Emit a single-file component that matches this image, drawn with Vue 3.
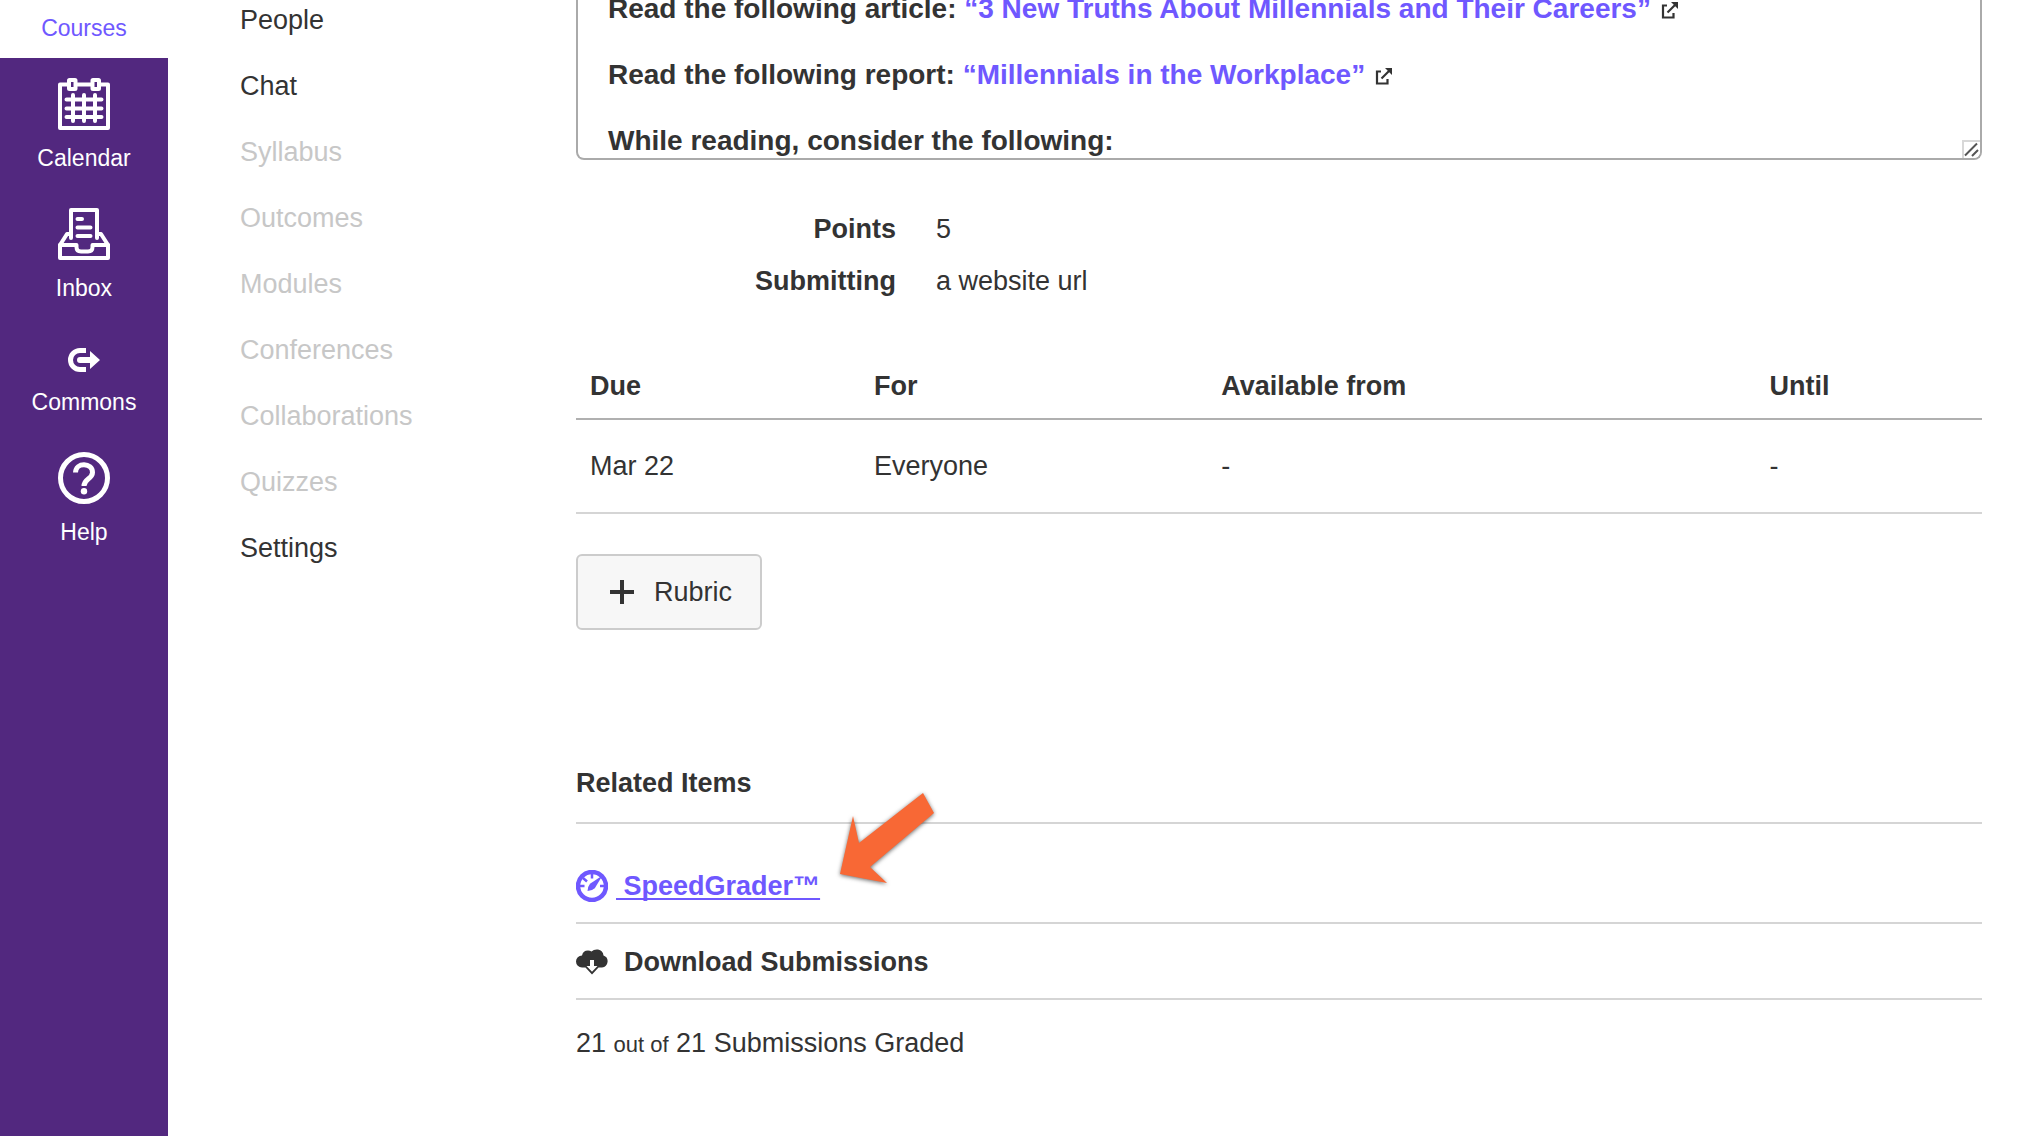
<template>
  <div class="app">
    <nav class="global-nav" aria-label="Global">
      <a href="#" class="global-link active">Courses</a>
      <div class="global-items">
        <a href="#" class="global-link">
          <svg width="52" height="52" viewBox="0 0 52 52" fill="none" stroke="#fff" stroke-width="4" stroke-linecap="round" stroke-linejoin="round">
            <path d="M10 6.500H2V50H50V6.500H42M18 6.500H34" />
            <rect x="11" y="2" width="6.500" height="9" rx="0.500" />
            <rect x="34.500" y="2" width="6.500" height="9" rx="0.500" />
            <path d="M15 17V43M26 17V43M37 17V43M8.500 21.500H43.500M8.500 30.500H43.500M8.500 39H43.500" />
          </svg>
          <span>Calendar</span>
        </a>
        <a href="#" class="global-link">
          <svg width="52" height="52" viewBox="0 0 52 52" fill="none" stroke="#fff" stroke-width="4" stroke-linecap="round" stroke-linejoin="round">
            <path d="M13 30V2H39V30" />
            <path d="M19.500 11H24M19.500 19.500H32.500M19.500 28H32.500" />
            <path d="M12 26H9L2 37V50H50V37L43 26H40" />
            <path d="M2 37H18.500V39Q18.500 43.500 23 43.500H30Q34.500 43.500 34.500 39V37H50" />
          </svg>
          <span>Inbox</span>
        </a>
        <a href="#" class="global-link">
          <svg width="52" height="36" viewBox="0 0 52 36">
            <path d="M28 12.500H22A9.300 9.300 0 0 0 22 31.500H28" fill="none" stroke="#fff" stroke-width="5" />
            <path d="M22 19H32V13L42 22L32 31V25H22A3 3 0 0 1 22 19Z" fill="#fff" />
          </svg>
          <span>Commons</span>
        </a>
        <a href="#" class="global-link">
          <svg width="52" height="52" viewBox="0 0 52 52" fill="none" stroke="#fff" stroke-width="5">
            <circle cx="26" cy="26" r="23.500" />
            <path d="M17.500 20.500C17.800 9.800 34.500 10.500 34.500 20.500C34.500 27 26 26.500 26 34" />
            <circle cx="26" cy="39.300" r="3.200" fill="#fff" stroke="none" />
          </svg>
          <span>Help</span>
        </a>
      </div>
    </nav>

    <nav class="course-nav" aria-label="Course">
      <ul>
        <li v-for="item in courseLinks" :key="item.name">
          <a href="#" :class="{ hidden: item.hidden }">{{ item.name }}</a>
        </li>
      </ul>
    </nav>

    <main class="content">
      <section class="description">
        <p v-for="r in readings" :key="r.title">
          {{ r.label }}
          <a href="#">{{ r.title }}</a>
          <svg class="external" width="18" height="18" viewBox="0 0 18 18" fill="none" stroke="#333" stroke-width="2.200">
            <path d="M6 4.500H2V16.500H12.500V12" />
            <path d="M6.500 11.500L15 3" />
            <path d="M10 1H17V8Z" fill="#333" stroke="none" />
          </svg>
        </p>
        <p>While reading, consider the following:</p>
        <svg class="resize-handle" width="18" height="18" viewBox="0 0 18 18" fill="none">
          <rect width="18" height="18" fill="#fff" />
          <path d="M1 18V1H18" stroke="#d8d8d8" stroke-width="2" />
          <path d="M3 15.500L15 3.500M10 16L16 10" stroke="#555" stroke-width="2" />
        </svg>
      </section>

      <dl class="details">
        <dt>Points</dt>
        <dd>5</dd>
        <dt>Submitting</dt>
        <dd>a website url</dd>
      </dl>

      <table class="dates">
        <thead>
          <tr>
            <th class="col-due">Due</th>
            <th class="col-for">For</th>
            <th class="col-from">Available from</th>
            <th>Until</th>
          </tr>
        </thead>
        <tbody>
          <tr>
            <td>Mar 22</td>
            <td>Everyone</td>
            <td>-</td>
            <td>-</td>
          </tr>
        </tbody>
      </table>

      <button type="button" class="rubric">
        <svg width="26" height="26" viewBox="0 0 26 26" stroke="#333" stroke-width="4">
          <path d="M13 1V25M1 13H25" />
        </svg>
        Rubric
      </button>

      <section class="related">
        <h2>Related Items</h2>
        <ul>
          <li>
            <a href="#" class="speedgrader">
              <svg width="32" height="32" viewBox="0 0 32 32" fill="none" stroke="#6f58ff">
                <circle cx="16" cy="16" r="14" stroke-width="4.500" />
                <path d="M16 3V8.500M3 16H8.500M24 16H29M7 8L11 11.500" stroke-width="2.500" />
                <path d="M26.500 5.500L18.800 18.300Q16 21 11.500 21Q11.500 17 14 13.800Z" fill="#6f58ff" stroke="none" />
              </svg>
              <span class="speedgrader-text">&nbsp;SpeedGrader™</span>
            </a>
            <svg class="pointer" width="100" height="96" viewBox="0 0 100 96">
              <path d="M87 3L98 23L34 77L51 93L4 84L17 26L23 53Z" fill="#f86835" />
            </svg>
          </li>
          <li>
            <a href="#" class="download">
              <svg width="32" height="26" viewBox="0 0 32 26">
                <path d="M6 18.500A6 6 0 0 1 6 6.500Q7 1.500 12 1.500Q14 1.500 15.500 2.500Q18 0 22 0.500Q27 1.500 27.500 6.500A6.200 6.200 0 0 1 26 18.500H22.500L16 25.500L9.500 18.500Z" fill="#333" />
                <path d="M14 11H18V17H21.500L16 22.800L10.500 17H14Z" fill="#fff" />
              </svg>
              Download Submissions
            </a>
          </li>
        </ul>
        <p class="graded">21 <small>out of</small> 21 Submissions Graded</p>
      </section>
    </main>
  </div>
</template>

<script setup>
const courseLinks = [
  { name: 'People' },
  { name: 'Chat' },
  { name: 'Syllabus', hidden: true },
  { name: 'Outcomes', hidden: true },
  { name: 'Modules', hidden: true },
  { name: 'Conferences', hidden: true },
  { name: 'Collaborations', hidden: true },
  { name: 'Quizzes', hidden: true },
  { name: 'Settings' },
]

const readings = [
  { label: 'Read the following article:', title: '“3 New Truths About Millennials and Their Careers”' },
  { label: 'Read the following report:', title: '“Millennials in the Workplace”' },
]
</script>

<style>
body {
  background: #fff;
}
</style>

<style scoped>
.app {
  display: flex;
  min-height: 100vh;
  font-family: "Helvetica Neue", "Liberation Sans", Arial, sans-serif;
  font-weight: 300;
  font-size: 27px;
  line-height: 30px;
  color: #333;
}

a {
  color: inherit;
  text-decoration: none;
}

ul,
dl,
dd,
p,
h2 {
  margin: 0;
  padding: 0;
}

ul {
  list-style: none;
}

/* purple bar */
.global-nav {
  flex: 0 0 168px;
  background: #52287f;
  color: #fff;
  font-size: 23px;
  line-height: 28px;
}

.global-items {
  display: flex;
  flex-direction: column;
  gap: 36px;
  padding-top: 20px;
}

.global-link {
  display: flex;
  flex-direction: column;
  align-items: center;
  gap: 14px;
}

.global-link.active {
  padding: 14px 0 16px;
  background: #fff;
  color: #6f58ff;
}

.course-nav {
  flex: 0 0 336px;
  padding: 5px 0 0 72px;
}

.course-nav ul {
  display: flex;
  flex-direction: column;
  gap: 36px;
}

.course-nav .hidden {
  color: #c7c7c7;
}

.content {
  flex: 1;
  min-width: 0;
  padding-right: 38px;
}

.description {
  position: relative;
  display: flex;
  flex-direction: column;
  justify-content: flex-end;
  gap: 36px;
  box-sizing: border-box;
  height: 160px;
  padding: 0 30px 2px;
  overflow: hidden;
  border: 2px solid #aaa;
  border-top: none;
  border-radius: 0 0 8px 8px;
  font-size: 28px;
  font-weight: bold;
}

.description p {
  flex-shrink: 0;
}

.description a {
  color: #6f58ff;
}

.external {
  margin-left: 10px;
  vertical-align: -1px;
}

.resize-handle {
  position: absolute;
  right: 0;
  bottom: 0;
}

.details {
  display: grid;
  grid-template-columns: 320px 1fr;
  gap: 22px 40px;
  margin-top: 54px;
}

.details dt {
  font-weight: bold;
  text-align: right;
}

.dates {
  width: 100%;
  margin-top: 58px;
  border-collapse: separate;
  border-spacing: 0;
  table-layout: fixed;
}

.dates th,
.dates td {
  box-sizing: border-box;
  padding: 31px 14px;
  border-bottom: 2px solid #d5d5d5;
  text-align: left;
}

.dates th {
  padding: 17px 14px;
  border-bottom-color: #b0b0b0;
}

.col-due {
  width: 20.2%;
}

.col-for {
  width: 24.7%;
}

.col-from {
  width: 39%;
}

.rubric {
  display: flex;
  align-items: center;
  gap: 19px;
  margin-top: 40px;
  padding: 21px 28px 21px 31px;
  border: 2px solid #ccc;
  border-radius: 6px;
  background: #f7f7f7;
  color: inherit;
  font: inherit;
}

.related {
  margin-top: 138px;
}

.related h2 {
  padding-bottom: 24px;
  font-size: 27px;
  font-weight: bold;
}

.related ul {
  padding-top: 24px;
  border-top: 2px solid #d5d5d5;
}

.related li {
  position: relative;
  padding: 23px 0 21px;
  border-bottom: 2px solid #d5d5d5;
  font-weight: bold;
}

.related li a {
  display: inline-flex;
  align-items: center;
  height: 30px;
  vertical-align: top;
}

.speedgrader {
  gap: 8px;
  color: #6f58ff;
}

.speedgrader-text {
  text-decoration: underline;
  text-decoration-thickness: 2px;
  text-underline-offset: 3px;
  text-decoration-skip-ink: none;
}

.download {
  gap: 16px;
}

.pointer {
  position: absolute;
  top: -58px;
  left: 260px;
  filter: drop-shadow(0 1px 2px rgba(0, 0, 0, 0.6));
}

.graded {
  padding-top: 28px;
}

.graded small {
  font-size: 22px;
}
</style>
